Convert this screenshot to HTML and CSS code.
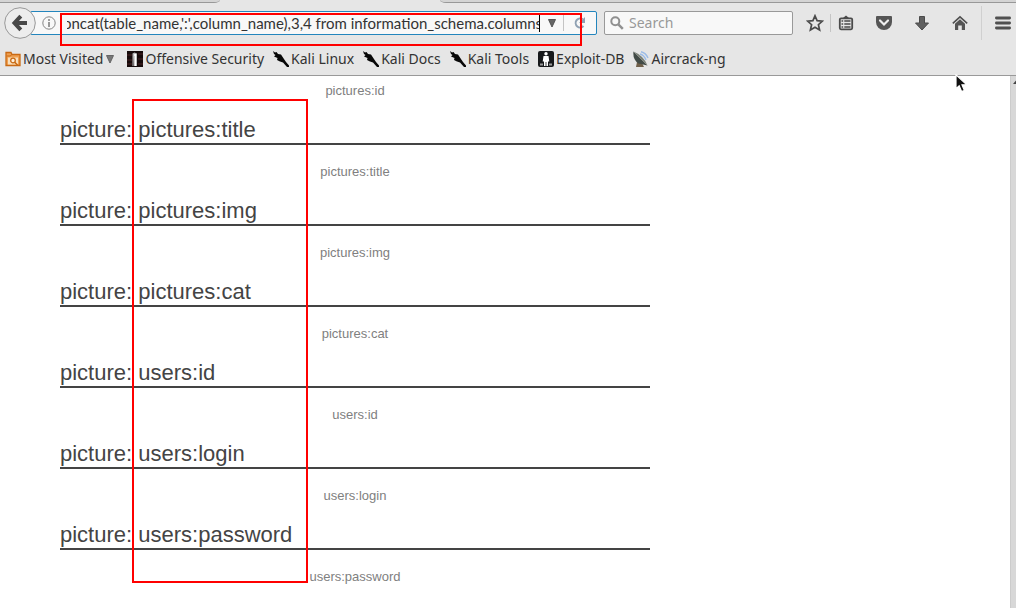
FILE: index.html
```html
<!DOCTYPE html>
<html lang="en">
<head>
<meta charset="utf-8">
<title>Photoblog</title>
<link rel="stylesheet" href="styles.css">
</head>
<body>
<header class="chrome">
  <div class="tabs"><span class="tab tab-left"></span><span class="tab-active"></span><span class="tab tab-right"></span></div>
  <div class="nav">
    <button class="back" aria-label="Back">
      <svg width="32" height="32" viewBox="0 0 32 32"><circle cx="16" cy="16" r="15.3" fill="#ededed" stroke="#989898"/><path d="M16.8 9.2L10.5 16l6.3 6.8M11 16h12" fill="none" stroke="#484848" stroke-width="4"/></svg>
    </button>
    <form class="url">
      <svg class="info" width="14" height="14" viewBox="0 0 14 14"><circle cx="7" cy="7" r="6.2" fill="none" stroke="#858585"/><path d="M7 6v5" stroke="#808080" stroke-width="1.6"/><circle cx="7" cy="4" r="1" fill="#808080"/></svg>
      <span class="divider"></span>
      <input class="address" aria-label="Address" value="oncat(table_name,':',column_name),3,4 from information_schema.columns">
      <span class="caret"></span>
      <button type="button" class="history" aria-label="History"><svg width="8" height="8" viewBox="0 0 8 8"><path d="M.5 .5h7L4 8z" fill="#666" stroke="#555"/></svg></button>
      <span class="divider"></span>
      <button type="button" class="reload" aria-label="Reload"><svg width="14" height="14" viewBox="0 0 14 14"><path d="M9.8 3.3A4.5 4.5 0 1 0 10.5 10" fill="none" stroke="#8fa1b3" stroke-width="2"/><path d="M12 1v6H6z" fill="#8fa1b3"/></svg></button>
    </form>
    <label class="search">
      <svg width="14" height="14" viewBox="0 0 14 14"><circle cx="5.3" cy="5.3" r="4" fill="none" stroke="#909090" stroke-width="2"/><path d="M8.3 8.3l4.5 4.5" stroke="#909090" stroke-width="2.5"/></svg>
      <input type="search" placeholder="Search" aria-label="Search">
    </label>
    <div class="tools">
      <button aria-label="Bookmark this page"><svg width="18" height="18" viewBox="0 0 18 18"><path d="M9 1.8l2.1 4.9 5.2.5-3.9 3.5 1.2 5.3L9 13.2 4.4 16l1.2-5.3-3.9-3.5 5.2-.5z" fill="none" stroke="#4b4b4b" stroke-width="1.7"/></svg></button>
      <span class="divider tool-divider"></span>
      <button aria-label="Bookmarks"><svg width="16" height="16" viewBox="0 0 16 16"><path d="M5 3l3-2.5L11 3" fill="#4b4b4b"/><rect x="1.8" y="3.3" width="12.4" height="11" rx="1.2" fill="none" stroke="#4b4b4b" stroke-width="1.8"/><path d="M3.5 6h1.7M3.5 9h1.7M3.5 12h1.7M6.3 6h6.2M6.3 9h6.2M6.3 12h6.2" stroke="#4b4b4b" stroke-width="1.3"/></svg></button>
      <button aria-label="Pocket"><svg width="16" height="16" viewBox="0 0 16 16"><path d="M1 1h14q1 0 1 1v5a8 8 0 0 1-16 0V2q0-1 1-1z" fill="#555"/><path d="M4 5.5l4 4 4-4" fill="none" stroke="#eee" stroke-width="2.2" stroke-linecap="round"/></svg></button>
      <button aria-label="Downloads"><svg width="16" height="16" viewBox="0 0 16 16"><path d="M5.5 1.5h5V8h4L8 15 1.5 8h4z" fill="#606060" stroke="#4b4b4b"/></svg></button>
      <button aria-label="Home"><svg width="16" height="16" viewBox="0 0 16 16"><path d="M.8 8.3L8 1.8l7.2 6.5" fill="none" stroke="#505050" stroke-width="1.6"/><path d="M3 8.8l5-4.5 5 4.5V15H9.8v-4.5H6.2V15H3z" fill="#555"/></svg></button>
      <span class="menu-divider"></span>
      <button aria-label="Menu"><svg width="16" height="14" viewBox="0 0 16 14"><path d="M1.4 2h13.2M1.4 7h13.2M1.4 12h13.2" stroke="#505050" stroke-width="2.8" stroke-linecap="round"/></svg></button>
    </div>
  </div>
  <nav class="bookmarks">
    <a href="#" class="most"><svg width="16" height="16" viewBox="0 0 16 16"><path d="M1 14.5v-13h5l1 2h8v11z" fill="#f0a050" stroke="#c96a14" stroke-width="1.3"/><path d="M1.5 5h4l1-1.5" fill="none" stroke="#c96a14"/><rect x="3" y="6.5" width="10" height="7" fill="#f8dfbd"/><circle cx="8" cy="9.5" r="2.3" fill="#fff0dc" stroke="#c96a14" stroke-width="1.3"/><path d="M9.7 11.2l3 3" stroke="#c96a14" stroke-width="1.6"/></svg><span>Most Visited</span><svg class="drop" width="8" height="8" viewBox="0 0 8 8"><path d="M.5 .5h7L4 8z" fill="#777" stroke="#666"/></svg></a>
    <a href="#"><svg width="16" height="16" viewBox="0 0 16 16"><path d="M0 0h16v16H0z" fill="#160b0b"/><path d="M0 4h5M0 9h5M11 3h5M11 8h5M0 13h5M11 13h5" stroke="#4a2224" stroke-width="1.2"/><path d="M5.5 2.5l2-1 2.5 1V15H9V5H7l-.5 10h-1z" fill="#bbb"/><path d="M7.2 3h1.9v12H7.2z" fill="#fff"/></svg><span>Offensive Security</span></a>
    <a href="#"><svg width="16" height="16" viewBox="0 0 16 16"><use href="#kali"/></svg><span>Kali Linux</span></a>
    <a href="#"><svg width="16" height="16" viewBox="0 0 16 16"><use href="#kali"/></svg><span>Kali Docs</span></a>
    <a href="#"><svg width="16" height="16" viewBox="0 0 16 16"><g id="kali"><path d="M0 0l2 1.5L3.5 1 5 3l3 .6 2.3 3.4 2.7 4 3 3.5v1.5h-2l-4-4.5L7 10.5 4 9l.5-2L1 5.5 2.5 4 1 3z" fill="#080808"/></g></svg><span>Kali Tools</span></a>
    <a href="#"><svg width="16" height="16" viewBox="0 0 16 16"><rect width="16" height="16" rx="2" fill="#17191b"/><circle cx="8" cy="2.8" r="1.7" fill="#fff"/><path d="M5.5 5h5l.8 5.5H10V15H8.4v-4h-.8v4H6v-4.5H4.7z" fill="#fff"/><path d="M2 13.5h3M11 13.5h3" stroke="#999" stroke-width="2"/></svg><span>Exploit-DB</span></a>
    <a href="#"><svg width="16" height="16" viewBox="0 0 16 16"><path d="M4 11l-1 5h8l-2-4z" fill="#70604a"/><path d="M.5 .5q-1 8 5 12l9 2z" fill="#424b47"/><path d="M.5 .5l14 14q-4-10-14-14z" fill="#7c8278"/><path d="M7 3q4 1 6 6M8 .8q5 1.200 7 6.200" fill="none" stroke="#9bbce8" stroke-width="1.4"/></svg><span>Aircrack-ng</span></a>
  </nav>
  <div class="mark mark-url"></div>
</header>
<main class="page">
  <div class="content">
    <p>pictures:id</p>
    <h2><span>picture:</span> pictures:title</h2><p>pictures:title</p>
    <h2><span>picture:</span> pictures:img</h2><p>pictures:img</p>
    <h2><span>picture:</span> pictures:cat</h2><p>pictures:cat</p>
    <h2><span>picture:</span> users:id</h2><p>users:id</p>
    <h2><span>picture:</span> users:login</h2><p>users:login</p>
    <h2><span>picture:</span> users:password</h2><p>users:password</p>
    <div class="mark mark-names"></div>
  </div>
  <div class="scrollbar"><svg width="6" height="8" viewBox="0 0 6 8"><path d="M2 8l5-6v6z" fill="#444"/></svg></div>
</main>
<svg class="pointer" width="14" height="20" viewBox="0 0 14 20"><path d="M1 .8v14l3.2-3 2.4 5.800 2.8-1.200L7 10.800h4.800z" fill="#111" stroke="#fff" stroke-width="1.2"/></svg>
</body>
</html>
```
FILE: styles.css
```css
* { box-sizing: border-box; }
body {
  margin: 0;
  min-height: 100vh;
  display: flex;
  flex-direction: column;
  position: relative;
  background: #fff;
  overflow: hidden;
}
button {
  display: flex;
  align-items: center;
  justify-content: center;
  padding: 0;
  border: 0;
  background: none;
}
svg { display: block; flex: none; }
input {
  min-width: 0;
  padding: 0;
  border: 0;
  outline: 0;
  background: none;
  color: #333;
}
.chrome, .chrome input { font: 14px/20px "Noto Sans", sans-serif; }
.chrome {
  position: relative;
  background: #e6e6e6;
  border-bottom: 1px solid #999;
  color: #333;
}
.tabs { display: flex; height: 3px; }
.tab { background: #d4d4d4; border-bottom: 1px solid #989898; }
.tab-left { width: 220px; border-bottom-right-radius: 6px 3px; }
.tab-active { width: 220px; }
.tab-right { flex: 1; border-bottom-left-radius: 6px 3px; }
.nav {
  display: flex;
  align-items: center;
  height: 40px;
  padding: 0 5px 0 4px;
}
.back { position: relative; z-index: 1; width: 32px; height: 32px; }
.url, .search {
  display: flex;
  align-items: center;
  height: 24px;
  border: 1px solid #999;
  border-radius: 2px;
  background: #f8f8f8;
}
.url { flex: 1; margin-left: -6px; border-color: #2385bd; padding-left: 11px; }
.info { margin-right: 5px; }
.divider { width: 1px; height: 16px; background: #c4c4c4; }
.chrome .address {
  flex: 1;
  margin-left: 5px;
  text-indent: -4px;
  font-family: Lato, sans-serif;
  font-size: 15px;
}
.caret { width: 1px; height: 18px; background: #000; }
.history { width: 23px; height: 22px; }
.reload { width: 32px; height: 22px; }
.search { width: 189px; margin-left: 7px; padding-left: 5px; gap: 5px; }
.search input { flex: 1; }
.search input::placeholder { color: #999; }
.tools { display: flex; align-items: center; margin-left: 13px; }
.tool-divider { height: 18px; margin: 0 7px 0 6px; }
.tools button + button { margin-left: 22px; }
.menu-divider { width: 1px; height: 34px; margin: 0 13px; background: #d0d0d0; }
.bookmarks { display: flex; height: 32px; align-items: center; padding-left: 5px; }
.bookmarks a {
  display: flex;
  align-items: center;
  gap: 2px;
  margin-right: 9px;
  color: #333;
  text-decoration: none;
  white-space: nowrap;
}
.bookmarks .most { margin-right: 13px; }
.drop { margin-left: 1px; }
.page { display: flex; flex: 1; justify-content: space-between; }
.content {
  position: relative;
  width: 650px;
  padding-left: 60px;
  font-family: "Liberation Sans", Arial, sans-serif;
}
.content p {
  margin: 0;
  padding: 7px 0 8px;
  font-size: 13px;
  line-height: 16px;
  color: #808080;
  text-align: center;
}
.content h2 {
  margin: 10px 0 12px;
  border-bottom: 2px solid #444;
  font-size: 22px;
  font-weight: 400;
  line-height: 26px;
  color: #444;
}
.scrollbar { width: 6px; background: #d8d8d8; border-left: 1px solid #ccc; }
.mark { position: absolute; border: 2px solid #f00; pointer-events: none; }
.mark-url { z-index: 2; left: 60px; top: 13px; width: 522px; height: 33px; }
.mark-names { left: 132px; top: 23px; width: 176px; height: 484px; }
.pointer { position: absolute; left: 955px; top: 74px; z-index: 3; }
```
